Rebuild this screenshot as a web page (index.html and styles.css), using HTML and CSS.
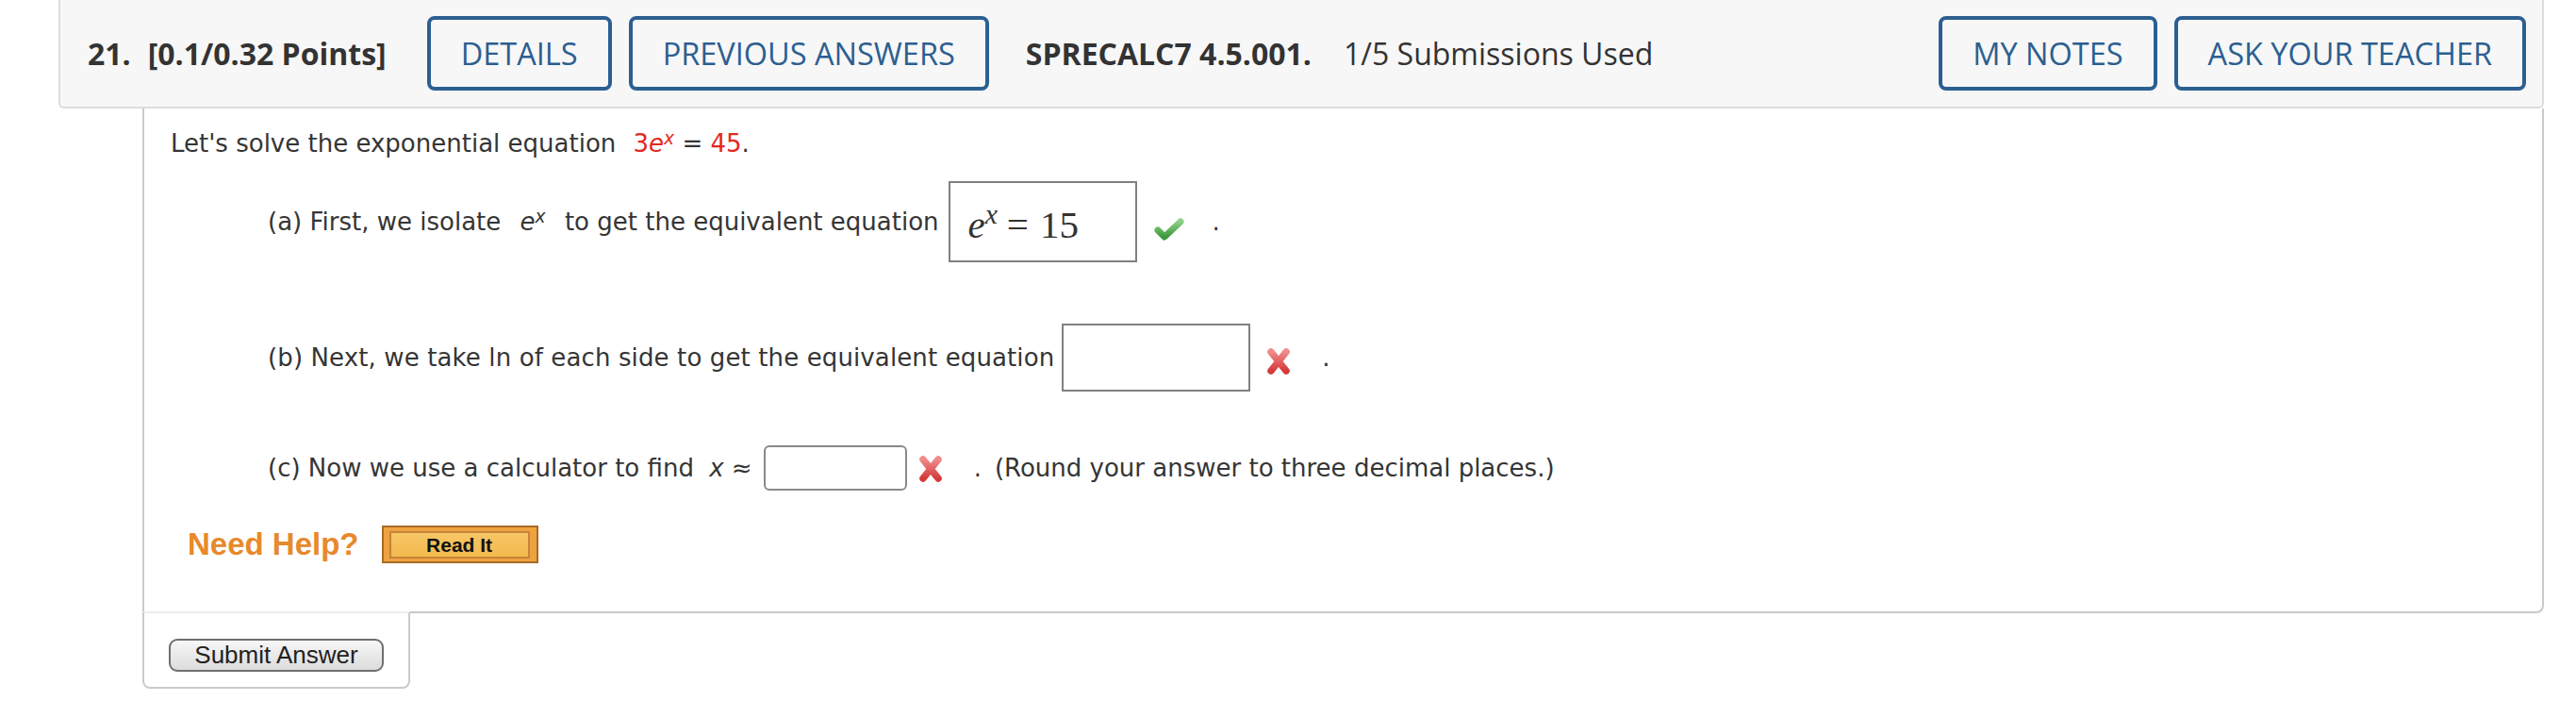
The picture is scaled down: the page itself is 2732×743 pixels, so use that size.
FILE: index.html
```html
<!DOCTYPE html>
<html>
<head>
<meta charset="utf-8">
<link rel="stylesheet" href="styles.css">
</head>
<body>
<div class="page">
  <div class="qhead">
    <span class="qnum">21.</span>
    <span class="qpts">[0.1/0.32 Points]</span>
    <span class="hbtn first">DETAILS</span>
    <span class="hbtn">PREVIOUS ANSWERS</span>
    <span class="qid">SPRECALC7 4.5.001.</span>
    <span class="qsub">1/5 Submissions Used</span>
    <span class="spacer"></span>
    <span class="hbtn">MY NOTES</span>
    <span class="hbtn">ASK YOUR TEACHER</span>
  </div>
  <div class="qbody">
    <div class="stmt">Let's solve the exponential equation <span class="expr"><span class="red">3<i>e</i><sup><i>x</i></sup></span> = <span class="red">45</span>.</span></div>

    <div class="part part-a">
      <span>(a) First, we isolate <span class="mi"><i>e</i><sup><i>x</i></sup></span> to get the equivalent equation</span>
      <span class="ansbox box-a"><span class="mth"><i>e</i><sup><i>x</i></sup><span class="meq">=</span>15</span></span>
      <svg class="mark check" width="32" height="26" viewBox="0 0 32 26">
        <defs><linearGradient id="gg" x1="0" y1="0" x2="0" y2="1"><stop offset="0" stop-color="#8ccf86"/><stop offset="1" stop-color="#3e983c"/></linearGradient></defs>
        <path d="M4 14 L11 21 L28 5" fill="none" stroke="url(#gg)" stroke-width="7" stroke-linecap="round" stroke-linejoin="round"/>
      </svg>
      <span class="dot">.</span>
    </div>

    <div class="part part-b">
      <span class="wide">(b) Next, we take ln of each side to get the equivalent equation</span>
      <span class="ansbox box-b"></span>
      <svg class="mark xmark xb" width="32" height="30" viewBox="0 0 32 30">
        <defs><linearGradient id="rg" x1="0" y1="0" x2="0" y2="1"><stop offset="0" stop-color="#f08a8a"/><stop offset="1" stop-color="#d53a3a"/></linearGradient></defs>
        <path d="M8 5 L24 25 M24 5 L8 25" fill="none" stroke="url(#rg)" stroke-width="7.5" stroke-linecap="round"/>
      </svg>
      <span class="dot">.</span>
    </div>

    <div class="part part-c">
      <span>(c) Now we use a calculator to find <span class="mi mi-c"><i>x</i> ≈</span></span>
      <span class="ansbox box-c"></span>
      <svg class="mark xmark xc" width="32" height="30" viewBox="0 0 32 30">
        <path d="M8 5 L24 25 M24 5 L8 25" fill="none" stroke="url(#rg)" stroke-width="7.5" stroke-linecap="round"/>
      </svg>
      <span class="dot dot-c">.</span>
      <span class="round">(Round your answer to three decimal places.)</span>
    </div>

    <div class="help">
      <span class="needhelp">Need Help?</span>
      <span class="readit"><span class="readit-in">Read It</span></span>
    </div>
  </div>
  <div class="qsubmit">
    <button class="submit">Submit Answer</button>
  </div>
</div>
</body>
</html>
```

FILE: styles.css
```css
html, body {
  margin: 0;
  padding: 0;
  background: #ffffff;
}

.page {
  margin-left: 62px;
  width: 2636px;
}

.qhead {
  display: flex;
  align-items: center;
  box-sizing: border-box;
  height: 115px;
  padding: 0 17px 0 29px;
  background: #f7f7f7;
  border: 2px solid #dddddd;
  border-top: none;
  border-radius: 0 0 6px 6px;
  font-family: "Open Sans", sans-serif;
  font-size: 32px;
  color: #333333;
}

.qnum {
  font-weight: 700;
}

.qpts {
  font-weight: 700;
  margin-left: 18px;
}

.hbtn {
  display: flex;
  align-items: center;
  box-sizing: border-box;
  height: 79px;
  padding: 0 32px;
  margin-left: 18px;
  border: 4px solid #2c5f91;
  border-radius: 8px;
  color: #2c5f91;
  font-size: 32.5px;
  white-space: nowrap;
}

.hbtn.first {
  margin-left: 43px;
}

.qid {
  font-weight: 700;
  margin-left: 39px;
}

.qsub {
  margin-left: 34px;
}

.spacer {
  flex: 1;
}

.qbody {
  margin-left: 89px;
  border-left: 2px solid #cacaca;
  border-right: 2px solid #cacaca;
  border-bottom: 2px solid #cacaca;
  border-radius: 0 0 8px 0;
  padding: 19px 0 51px 28px;
  font-family: "DejaVu Sans", Verdana, sans-serif;
  font-size: 26px;
  color: #353535;
}

.stmt {
  line-height: 36px;
  height: 36px;
}

.expr {
  margin-left: 10px;
}

.red {
  color: #e2291f;
}

sup {
  font-size: 0.72em;
  line-height: 0;
  vertical-align: 0.45em;
}

.mi {
  margin: 0 12px;
}

.mi-c {
  margin: 0 4px 0 8px;
}

.wide {
  letter-spacing: 0.12px;
}

.part {
  display: flex;
  align-items: center;
  margin-left: 103px;
  white-space: nowrap;
  line-height: 36px;
}

.part-a {
  margin-top: 22px;
}

.part-b {
  margin-top: 65px;
}

.part-c {
  margin-top: 57px;
}

.ansbox {
  display: flex;
  align-items: center;
  box-sizing: border-box;
  background: #ffffff;
  border: 2px solid #808080;
}

.box-a {
  width: 200px;
  height: 86px;
  margin-left: 10px;
  padding-left: 19px;
  padding-top: 6px;
}

.mth {
  font-family: "Liberation Serif", "Times New Roman", serif;
  font-size: 41px;
  color: #333333;
  line-height: 1;
}

.mth sup {
  font-size: 0.72em;
  vertical-align: 0.5em;
}

.meq {
  margin: 0 12px 0 10px;
}

.box-b {
  width: 200px;
  height: 72px;
  margin-left: 8px;
}

.box-c {
  width: 152px;
  height: 48px;
  margin-left: 8px;
  border-radius: 6px;
  border-color: #8a8a8a;
}

.mark {
  display: block;
  flex: none;
}

.check {
  margin-left: 18px;
  margin-top: 16px;
}

.xb {
  margin-left: 14px;
  margin-top: 8px;
}

.xc {
  margin-left: 9px;
  margin-top: 2px;
}

.dot {
  margin-left: 30px;
}

.dot-c {
  margin-left: 30px;
}

.round {
  margin-left: 14px;
}

.help {
  display: flex;
  align-items: center;
  margin-top: 37px;
  margin-left: 18px;
}

.needhelp {
  font-family: "Liberation Sans", Arial, sans-serif;
  font-weight: 700;
  font-size: 33px;
  color: #e7892c;
}

.readit {
  display: flex;
  box-sizing: border-box;
  width: 166px;
  height: 40px;
  margin-left: 24px;
  padding: 4px 7px 3px 6px;
  background: #eea240;
  border: 2px solid #a96b26;
}

.readit-in {
  flex: 1;
  display: flex;
  align-items: center;
  justify-content: center;
  background: linear-gradient(#f7c766, #f3b94e);
  border: 2px solid #c58437;
  font-family: "Liberation Sans", Arial, sans-serif;
  font-weight: 700;
  font-size: 21px;
  color: #111111;
}

.qsubmit {
  box-sizing: border-box;
  width: 284px;
  margin-left: 89px;
  margin-top: -2px;
  padding: 27px 0 16px 26px;
  border: 2px solid #cacaca;
  border-top: 2px solid #ececec;
  border-radius: 0 0 8px 8px;
  background: #ffffff;
}

.submit {
  display: block;
  box-sizing: border-box;
  width: 228px;
  height: 35px;
  padding: 0;
  border: 2px solid #6f6f6f;
  border-radius: 9px;
  background: linear-gradient(#f7f7f7, #dcdcdc);
  font-family: "Liberation Sans", Arial, sans-serif;
  font-size: 26px;
  color: #222222;
}
```
